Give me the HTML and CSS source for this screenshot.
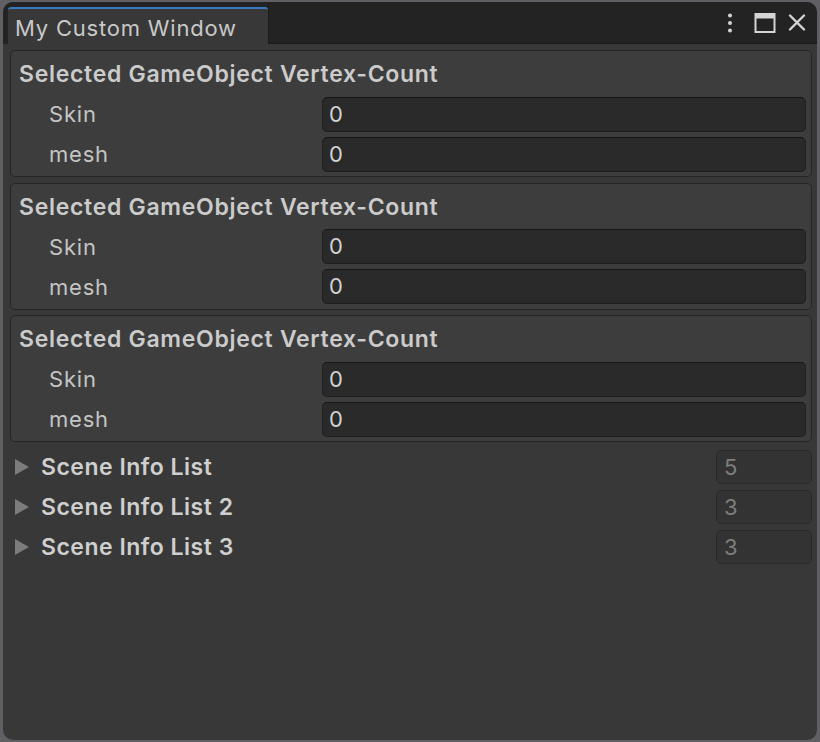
FILE: index.html
```html
<!DOCTYPE html>
<html>
<head>
<meta charset="utf-8">
<link rel="stylesheet" href="styles.css">
</head>
<body>
<div class="window">
  <div class="titlebar">
    <div class="tab">My Custom Window</div>
    <div class="titlefill">
      <svg class="ico kebab" width="14" height="22" viewBox="0 0 14 22"><circle cx="7" cy="3.5" r="2" fill="#d4d4d4"/><circle cx="7" cy="11" r="2" fill="#d4d4d4"/><circle cx="7" cy="18.5" r="2" fill="#d4d4d4"/></svg>
      <svg class="ico max" width="24" height="22" viewBox="0 0 24 22"><rect x="2.5" y="2" width="19" height="18" fill="none" stroke="#d4d4d4" stroke-width="2"/><rect x="2.5" y="2" width="19" height="4.5" fill="#d4d4d4"/></svg>
      <svg class="ico" width="22" height="22" viewBox="0 0 22 22"><path d="M4 3.5 L18 17.5 M18 3.5 L4 17.5" stroke="#d4d4d4" stroke-width="2.4" stroke-linecap="round"/></svg>
    </div>
  </div>
  <div class="content">
    <div class="group">
      <div class="ghead">Selected GameObject Vertex-Count</div>
      <div class="row"><span class="label">Skin</span><div class="field">0</div></div>
      <div class="row"><span class="label">mesh</span><div class="field">0</div></div>
    </div>
    <div class="group">
      <div class="ghead">Selected GameObject Vertex-Count</div>
      <div class="row"><span class="label">Skin</span><div class="field">0</div></div>
      <div class="row"><span class="label">mesh</span><div class="field">0</div></div>
    </div>
    <div class="group last">
      <div class="ghead">Selected GameObject Vertex-Count</div>
      <div class="row"><span class="label">Skin</span><div class="field">0</div></div>
      <div class="row"><span class="label">mesh</span><div class="field">0</div></div>
    </div>
    <div class="list">
      <div class="lrow"><span class="tri"></span><span class="ltext">Scene Info List</span><div class="count">5</div></div>
      <div class="lrow"><span class="tri"></span><span class="ltext">Scene Info List 2</span><div class="count">3</div></div>
      <div class="lrow"><span class="tri"></span><span class="ltext">Scene Info List 3</span><div class="count">3</div></div>
    </div>
  </div>
</div>
</body>
</html>
```
FILE: styles.css
```css
html, body {
  margin: 0;
  padding: 0;
  height: 100%;
  background: #606064;
}
body {
  padding: 2px 3px 2px 3px;
  box-sizing: border-box;
  font-family: Inter, "Noto Sans", sans-serif;
}
.window {
  height: 100%;
  background: #383838;
  border-radius: 10px;
  overflow: hidden;
  display: flex;
  flex-direction: column;
}
.titlebar {
  display: flex;
  height: 42px;
  background: #232323;
  flex-shrink: 0;
}
.tab {
  margin: 5px 0 0 5px;
  width: 260px;
  box-sizing: border-box;
  background: #383838;
  border-top: 2px solid #3a79c0;
  border-radius: 3px 3px 0 0;
  color: #c8c8c8;
  font-size: 22px;
  letter-spacing: 0.8px;
  line-height: 34px;
  padding: 2px 0 0 7px;
}
.titlefill {
  flex: 1;
  display: flex;
  justify-content: flex-end;
  align-items: center;
  padding: 0 9px 0 0;
  border-bottom: 1px solid #191919;
  border-left: 1px solid #1c1c1c;
}
.ico { display: block; }
.kebab { margin-right: 16px; }
.max { margin-right: 9px; }
.content {
  padding: 6px 5px 0 7px;
}
.group {
  background: #3d3d3d;
  border: 1px solid #252525;
  border-radius: 5px;
  padding: 3px 5px 2px 8px;
  margin-bottom: 5.5px;
}
.group.last { margin-bottom: 5px; }
.ghead {
  height: 40px;
  line-height: 40px;
  font-size: 23px;
  font-weight: 600;
  letter-spacing: 0.7px;
  color: #cbcbcb;
}
.row {
  height: 40px;
  display: flex;
  align-items: center;
}
.label {
  width: 303px;
  padding-left: 30px;
  box-sizing: border-box;
  font-size: 22px;
  letter-spacing: 0.8px;
  color: #c4c4c4;
}
.field {
  flex: 1;
  height: 35px;
  box-sizing: border-box;
  background: #2a2a2a;
  border: 1px solid #1e1e1e;
  border-top-color: #161616;
  border-radius: 5px;
  color: #d2d2d2;
  font-size: 22px;
  line-height: 33px;
  padding-left: 6px;
}
.lrow {
  height: 40px;
  display: flex;
  align-items: center;
}
.tri {
  width: 0;
  height: 0;
  border-top: 8px solid transparent;
  border-bottom: 8px solid transparent;
  border-left: 14px solid #7c7c7c;
  margin-left: 5px;
  margin-right: 12px;
}
.ltext {
  flex: 1;
  font-size: 23px;
  font-weight: 600;
  letter-spacing: 0.5px;
  color: #cfcfcf;
}
.count {
  width: 96px;
  height: 34px;
  box-sizing: border-box;
  background: #333333;
  border: 1px solid #2a2a2a;
  border-radius: 5px;
  color: #7e7e7e;
  font-size: 22px;
  line-height: 32px;
  padding-left: 7px;
}
```
